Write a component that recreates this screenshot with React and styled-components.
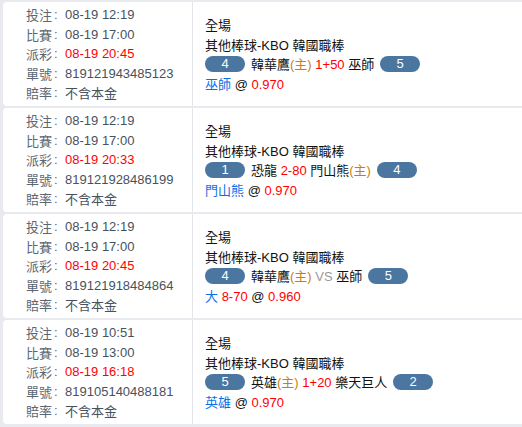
import React from 'react';
import styled, { createGlobalStyle } from 'styled-components';

const GlobalStyle = createGlobalStyle`
  body {
    margin: 0;
    background: #e8eaef;
    font-family: 'Liberation Sans', 'Noto Sans CJK TC', sans-serif;
    font-size: 13px;
  }
`;

const List = styled.div`
  display: flex;
  flex-direction: column;
  gap: 2px;
  padding: 2px 0 0 3px;
`;

const Row = styled.div`
  display: flex;
  height: 104px;
  background: #fff;
  border-radius: 4px 0 0 4px;
`;

const Info = styled.div`
  width: 166px;
  padding: 3px 0 0 23px;
  border-right: 1px solid #e3e5ea;
  flex-shrink: 0;
`;

const Line = styled.div`
  display: flex;
  height: 19.5px;
  align-items: center;
  white-space: pre;
`;

const Label = styled.span`
  color: #5b6773;
`;

const Colon = styled.span`
  color: #5b6773;
  width: 11px;
  padding-left: 2px;
`;

const Value = styled.span`
  color: ${p => (p.$red ? '#ff0000' : '#46525e')};
`;

const Bet = styled.div`
  display: flex;
  flex-direction: column;
  justify-content: center;
  padding-left: 12px;
  color: #111;
`;

const Teams = styled.div`
  display: flex;
  align-items: center;
  height: 19.5px;
  gap: 6px;
  white-space: pre;
`;

const Badge = styled.span`
  display: inline-flex;
  align-items: center;
  justify-content: center;
  width: 40px;
  height: 16px;
  border-radius: 8px;
  background: #4a76a0;
  color: #fff;
  font-size: 13px;
`;

const Home = styled.span`
  color: #c8800c;
`;

const Red = styled.span`
  color: #ff0000;
`;

const Blue = styled.span`
  color: #0a6fe6;
`;

const Vs = styled.span`
  color: #999;
`;

const rows = [
  {
    info: ['08-19 12:19', '08-19 17:00', '08-19 20:45', '819121943485123'],
    home: '4', away: '5',
    match: <span>韓華鷹<Home>(主)</Home> <Red>1+50</Red> 巫師</span>,
    pick: <span><Blue>巫師</Blue> @ <Red>0.970</Red></span>,
  },
  {
    info: ['08-19 12:19', '08-19 17:00', '08-19 20:33', '819121928486199'],
    home: '1', away: '4',
    match: <span>恐龍 <Red>2-80</Red> 門山熊<Home>(主)</Home></span>,
    pick: <span><Blue>門山熊</Blue> @ <Red>0.970</Red></span>,
  },
  {
    info: ['08-19 12:19', '08-19 17:00', '08-19 20:45', '819121918484864'],
    home: '4', away: '5',
    match: <span>韓華鷹<Home>(主)</Home> <Vs>VS</Vs> 巫師</span>,
    pick: <span><Blue>大</Blue> <Red>8-70</Red> @ <Red>0.960</Red></span>,
  },
  {
    info: ['08-19 10:51', '08-19 13:00', '08-19 16:18', '819105140488181'],
    home: '5', away: '2',
    match: <span>英雄<Home>(主)</Home> <Red>1+20</Red> 樂天巨人</span>,
    pick: <span><Blue>英雄</Blue> @ <Red>0.970</Red></span>,
  },
];

const labels = ['投注', '比賽', '派彩', '單號', '賠率'];

export default function App() {
  return (
    <>
      <GlobalStyle />
      <List>
        {rows.map((r, i) => (
          <Row key={i}>
            <Info>
              {labels.map((l, j) => (
                <Line key={l}>
                  <Label>{l}</Label>
                  <Colon>:</Colon>
                  <Value $red={j === 2}>{j < 4 ? r.info[j] : '不含本金'}</Value>
                </Line>
              ))}
            </Info>
            <Bet>
              <Line>全場</Line>
              <Line>其他棒球-KBO 韓國職棒</Line>
              <Teams>
                <Badge>{r.home}</Badge>
                {r.match}
                <Badge>{r.away}</Badge>
              </Teams>
              <Line>{r.pick}</Line>
            </Bet>
          </Row>
        ))}
      </List>
    </>
  );
}
